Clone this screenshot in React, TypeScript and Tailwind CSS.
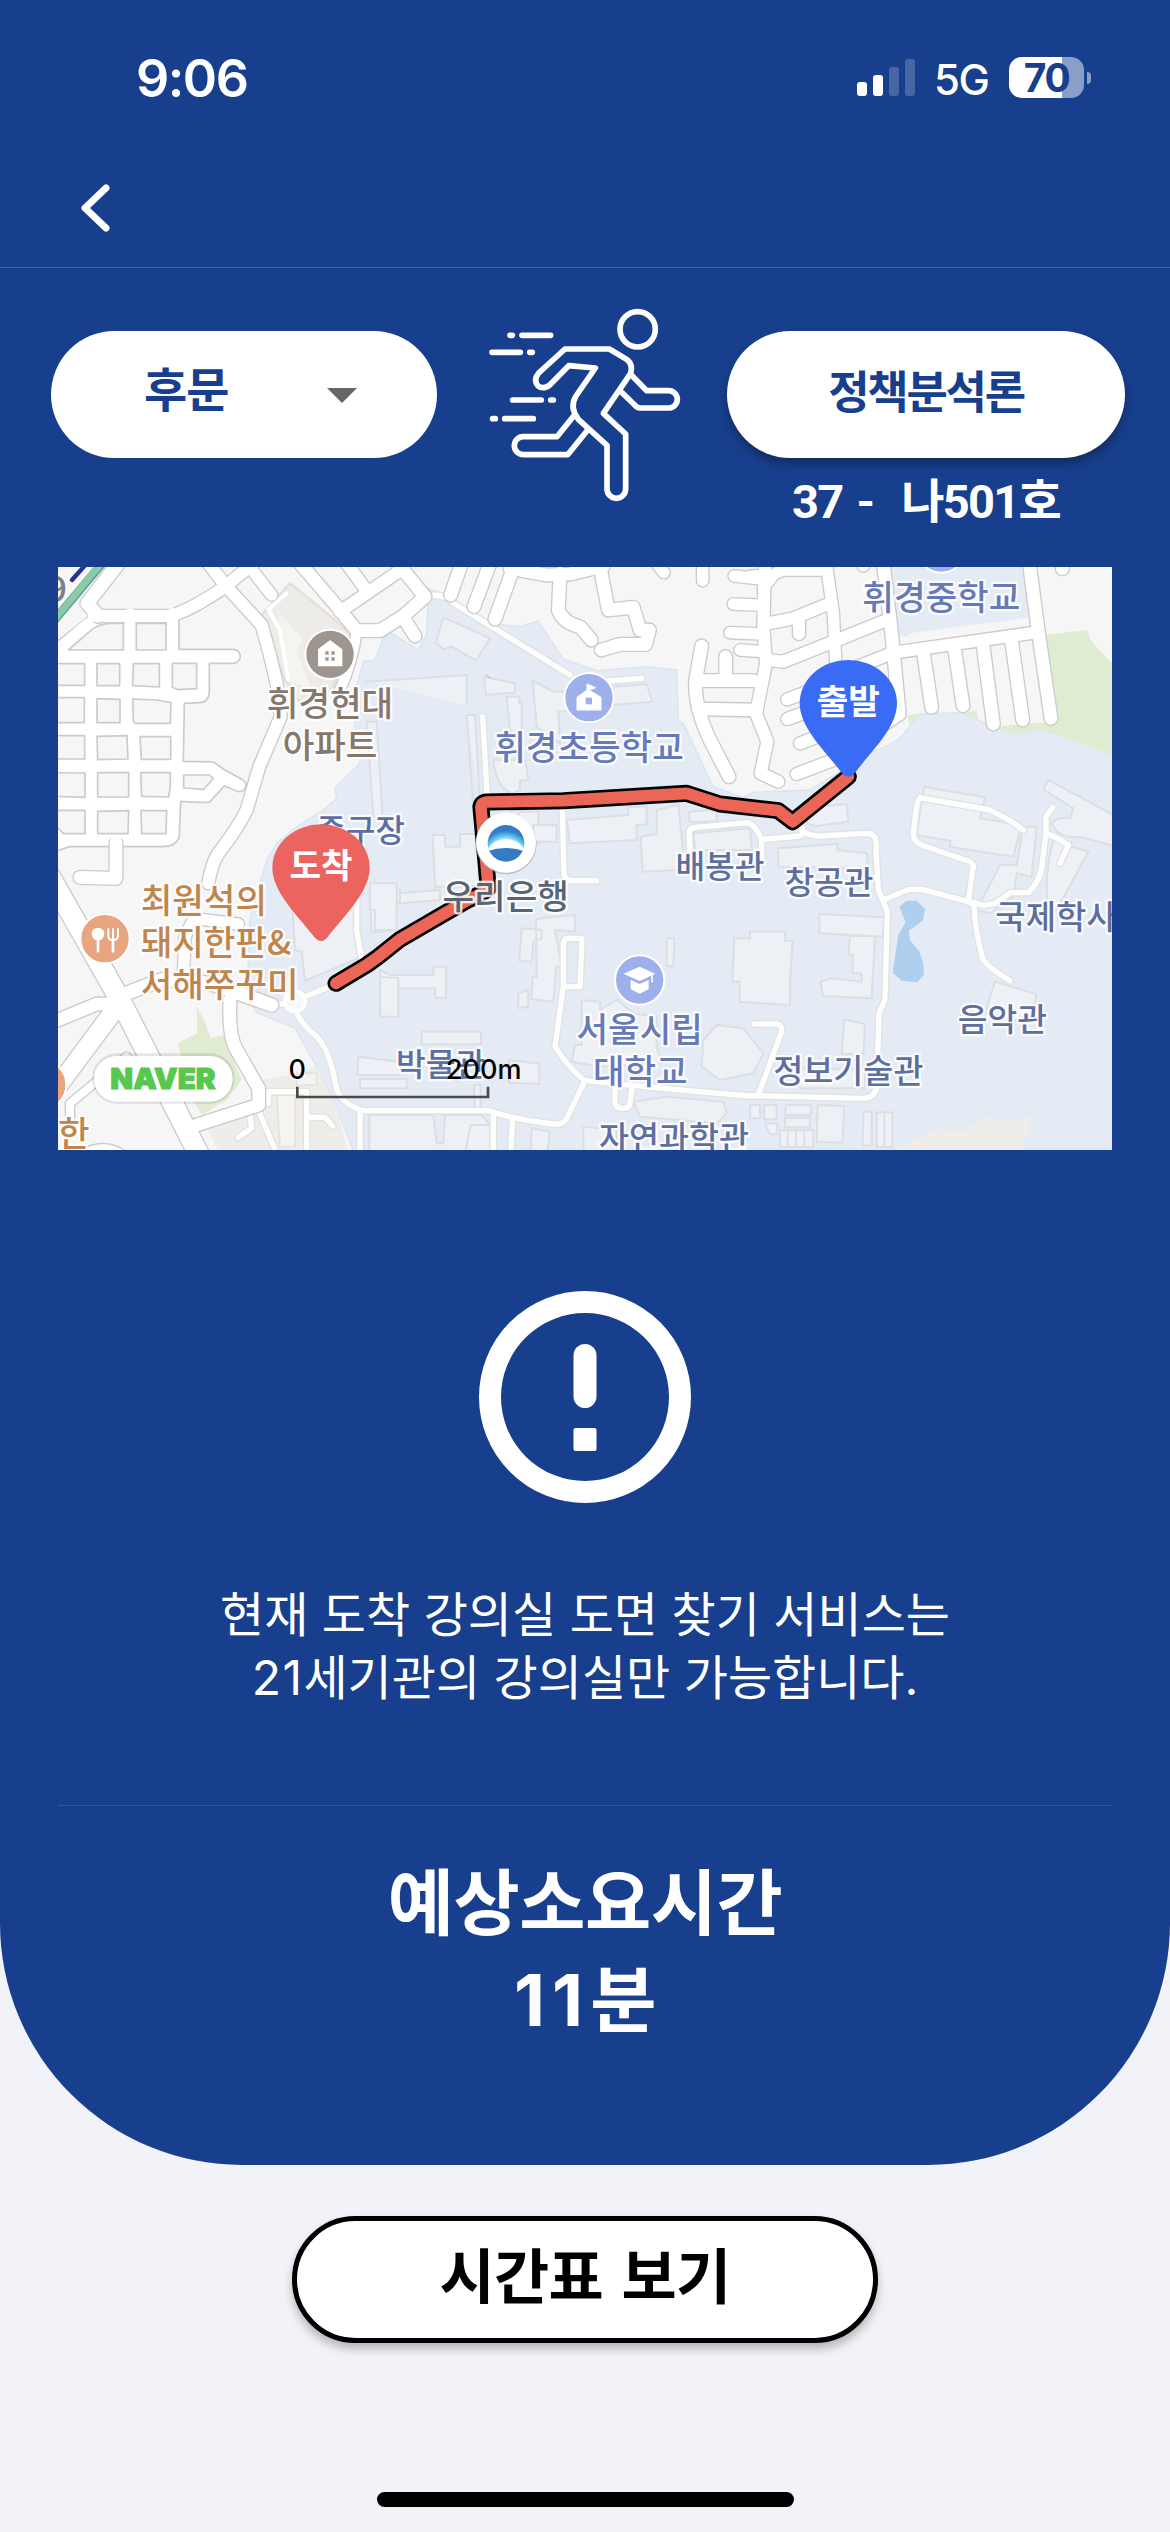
const KR = "font-['Noto_Sans_CJK_KR',sans-serif]";

type Shape = { x?: number; y?: number; d: string; w?: number };

// Map geometry is kept in sheets of the same scale; x and y offset each sheet.
const cityRoads: Shape[] = [
  { w: 40, d: "M205 10L112 130L145 168" },
  { w: 36, d: "M140 168H365Q440 140 525 80L610 10" },
  { w: 36, d: "M475 10L528 78L635 195Q660 280 680 370L692 470L628 620L590 750Q560 810 505 880Q485 910 475 970" },
  { w: 34, d: "M590 10L665 105" },
  { w: 38, d: "M750 10L870 150L920 212H990L1060 168L1125 110L1035 0" },
  { w: 36, d: "M890 10L945 85M870 155L1060 25" },
  { w: 38, d: "M1065 180L1095 228" },
  { w: 30, d: "M920 212Q910 300 870 390" },
  { w: 38, d: "M198 850V955L90 952" },
  { y: 870, w: 60, d: "M0 80L205 440L450 920" },
  { y: 870, w: 38, d: "M0 520L140 462H190" },
  { y: 870, w: 54, d: "M205 465L0 740" },
  { y: 870, w: 24, d: "M230 620L60 760V850M110 905Q170 880 220 915" },
  { y: 870, w: 40, d: "M230 430L340 388L480 400L665 465" },
  { y: 870, w: 38, d: "M540 450Q535 560 560 600L626 715V765L440 825" },
  { y: 870, w: 34, d: "M430 205L565 222M432 205L405 260L400 380" },
  { x: 1050, w: 38, d: "M185 10L152 105M270 10L222 140M345 10L285 177M330 25L440 45L510 42L610 18" },
  { x: 1050, w: 38, d: "M480 40L475 150Q490 190 540 200L574 240" },
  { x: 1050, w: 38, d: "M600 20L625 150L700 142L720 210H748L737 253H660L604 270" },
  { x: 1050, w: 34, d: "M770 10L792 38M908 10V62M1003 48L1110 60M1000 132L1090 136M990 218L1090 222M1020 270L1090 275" },
  { x: 1050, w: 38, d: "M905 258L887 360Q882 440 930 540L987 650M977 290V360M887 362H1060M895 447L1070 450" },
  { x: 2100, w: 36, d: "M0 50L50 45M45 10L40 200L48 310L18 460L52 545L32 640L85 665" },
  { x: 2100, w: 34, d: "M40 90Q60 40 100 30L230 30M230 20L250 160L258 320" },
  { x: 2100, w: 36, d: "M45 192L130 175L235 132M147 180V222M55 300L100 305L250 245L410 180" },
  { x: 2100, w: 38, d: "M400 10L425 220L448 462L330 540" },
  { x: 2100, w: 36, d: "M260 345L430 278L860 217M112 418L220 378M112 477L220 437M150 550L240 515M140 642L290 585" },
  { x: 2100, w: 38, d: "M838 10L865 215L903 475M522 290L545 442M615 275L639 437M700 262L730 492M785 245L818 480" },
  { x: 2100, w: 38, d: "M340 0V15M937 10V26" },
];

const campusRoads: Shape[] = [
  { x: 1050, d: "M85 108Q130 98 165 132L510 345M600 365L725 355M248 470L262 720M487 740L492 940Q495 965 525 962H590" },
  { x: 1050, d: "M870 880L868 815Q870 803 885 802L1040 788Q1062 788 1085 838V900M1085 838L1200 828Q1215 815 1205 800L1180 770M1205 812Q1230 828 1260 828L1400 820Q1428 820 1429 850V890" },
  { x: 2100, d: "M820 810L785 785L720 750L510 713Q500 715 490 825Q492 848 520 857L660 905Q675 915 668 930L655 1025" },
  { x: 2100, d: "M908 742L888 770V820L878 900Q875 960 835 998H780L735 1030L700 1036L660 1025M888 820Q920 830 955 855L930 910" },
  { x: 2100, y: 870, d: "M378 0L385 120L400 155L412 185L405 450L387 490L380 715Q370 745 340 745L0 737M400 150L475 118H515L655 155L672 165Q675 240 698 325Q710 350 780 392" },
  { x: 2100, y: 870, d: "M12 522H80Q100 525 93 550L25 735" },
  { x: 1050, y: 870, d: "M490 410H540L546 265H505Q490 265 490 285V410L465 590Q510 660 555 692L820 718L1050 738" },
  { x: 1050, y: 870, d: "M555 692L500 805Q490 825 460 822Q350 810 265 782H-110Q-170 765 -190 720Q-210 600 -250 560Q-300 520 -312 480M280 790V910M338 810L332 910M645 700V755Q645 775 670 775Q690 775 690 755L696 715M-120 785V910" },
  { y: 870, d: "M765 440L850 405M685 462H705M920 120L920 240L935 330M600 790L605 835L565 862M625 780L680 910M655 760V725H770V900M770 802H825L848 828" },
];

const buildings: Shape[] = [
  { d: "M948 365L1250 345V435M1250 465L1270 740M1250 465L1275 465L1290 740M950 485H980L998 770H970Z" },
  { x: 1050, d: "M130 172L205 205L270 235L228 302L155 260L130 268L108 248Z" },
  { x: 1050, d: "M252 350L345 370V398L258 405ZM320 410H358V430H365V560L330 510Z" },
  { x: 1050, d: "M398 362L460 395H530V450L475 455L480 550L410 500ZM640 380L740 372L757 425L640 435Z" },
  { x: 1050, d: "M280 600Q290 690 340 700L360 690V662L385 660L380 625L375 600ZM355 755H415V850H355ZM98 825H135V860H180V822H235V980H105Z" },
  { x: 1050, d: "M400 795H470V845H400ZM500 780L685 765V740H740V793L710 795V840L510 850ZM770 750L835 735L850 880L830 930L728 935L722 830L770 822Z" },
  { x: 1050, d: "M868 755L950 748V785H868ZM880 820L1050 805L1055 870H885Z" },
  { x: 2100, d: "M180 740L290 733L295 785L200 798L170 790ZM85 865L262 852V870L350 880L355 925L85 920Z" },
  { x: 2100, d: "M522 680L705 712L690 775L815 795L790 890L600 860L602 842L500 825ZM820 800L860 800L845 950L800 940L790 1010L720 1060L680 1050L750 915H800Z" },
  { x: 2100, d: "M895 660L1100 770V860L990 830Q930 840 905 790Q920 770 960 775L970 745L880 688ZM965 860L1015 875L920 1050H895Q880 950 910 840" },
  { x: 1050, y: 870, d: "M0 130L120 120V150L0 160ZM-90 100L0 120V155L-50 160V245H-85ZM-60 360L-30 375H100V350H138V443H105V415H-15V500H-60Z" },
  { x: 1050, y: 870, d: "M365 235L425 240V265L400 275L395 335L358 332ZM408 208L462 200L525 195V245L465 240L485 350H468L460 455L395 448L398 380H410ZM355 430L385 420V470L355 475Z" },
  { x: 1050, y: 870, d: "M800 265H823L820 350L800 348ZM1003 265H1050V245H1155V272H1178L1170 400V465L1020 455L1018 395H997Z" },
  { x: 1050, y: 870, d: "M910 570L950 525L1030 535L1090 610L1060 670L960 690L905 650ZM545 450L600 455V480L650 450L700 490L770 500V590L785 640L600 650L515 635L525 585H545Z" },
  { x: 1050, y: 870, d: "M65 545H243V583H65ZM327 630L418 642V702L327 698ZM222 705H242V795H226ZM-125 620L0 635V675H-128ZM-120 687H20V715H-120ZM-92 795H100L110 880H130L135 795H245L270 825V920H-92ZM395 835L450 845L440 920H392ZM212 825H275V910H195Z" },
  { x: 1050, y: 870, d: "M700 755L800 740L970 755L980 790L950 820L720 800ZM550 830L650 840V910H550Z" },
  { x: 2100, y: 870, d: "M208 192L403 202L397 260L208 250ZM300 258H375L365 445L218 438L212 395L245 385L335 395V370H308V315H295ZM283 508L345 522L340 612H275ZM735 395L860 433L840 520L705 490ZM150 655L345 660V715H150Z" },
  { x: 2100, y: 870, d: "M108 765H182V795H105ZM105 803H180V832H105ZM203 765L283 768L277 878L200 875ZM340 785H365V887H338ZM380 787H427V892H380ZM403 787V892M90 840H190V892H90ZM113 840V892M138 840V892M163 840V892M0 765H30V805H0ZM42 765H80V808H42ZM45 820H82V853H60Z" },
  { y: 870, d: "M725 130L910 145L925 325L765 392L755 305L735 300ZM960 100L1040 100V240H975V180H960ZM990 380L1045 385V500H990Z" },
];

const blocks: string[] = [
  "M10 311H104V376H10Z", "M141 311H209V377H141Z", "M250 311H328V381L248 377Z", "M367 310H440V386L385 389L367 382Z",
  "M10 413H103V488H10Z", "M141 416L210 418V488H141Z", "M248 417L320 420L363 428L361 490H255L250 482Z",
  "M10 527H104V597H10Z", "M141 529L231 527L234 597L143 599Z", "M270 530H362V598H274Z",
  "M10 638L105 639V712L10 709Z", "M143 638H236V711H143Z", "M272 638H361V680L356 711L275 709Z", "M401 645H478L490 655L462 688L401 684Z",
  "M10 751H105V821H40L24 805H10Z", "M143 754L236 752L234 821H143Z", "M273 752H350L348 821H275Z",
  "M55 270L130 205Q150 192 180 190H220V270Z", "M259 190H348V270H259Z",
];

const PIN = "M0 350Q-10 350 -20 338C-65 278 -146 205 -146 130A146 130 0 0 1 146 130C146 205 65 278 20 338Q10 350 0 350Z";
const ROUTE =
  "M2395 650L2228 785L2185 752L2010 732L1910 700L1540 722L1310 726Q1291 728 1293 745L1315 985Q1300 1000 1250 1022L1050 1138L985 1190L950 1215L858 1270";

const at = (s: Shape) => `translate(${s.x ?? 0} ${s.y ?? 0})`;

type LabelProps = { x: number; y: number; t: string; c: string; s?: number; a?: "start" | "middle" };
function Label({ x, y, t, c, s = 103, a = "middle" }: LabelProps) {
  return (
    <text x={x} y={y} fill={c} fontSize={s} fontWeight={500} textAnchor={a} stroke="#fff" strokeOpacity={0.85} strokeWidth={14} strokeLinejoin="round" paintOrder="stroke">
      {t}
    </text>
  );
}

function CampusMap() {
  return (
    <svg viewBox="24 21 3162 1749" className={`block h-[583px] w-[1054px] ${KR}`} strokeLinecap="round" strokeLinejoin="round">
      <rect x="0" y="0" width="3200" height="1800" fill="#f6f6f6" />
      <path
        d="M1000 235L1025 220L1105 270L1130 220L1135 85L1200 110L1320 190L1410 200L1465 183L1540 297L1640 332L1790 320L1880 330L1885 480L1900 490L1990 680L2080 712L2110 697L2280 690L2450 585L2545 540L2610 462L2735 458L2830 500L2905 523L2975 508L3200 585V1800H920L860 1640L800 1520L735 1405L620 1358L590 1310L600 1070L650 900L680 850L740 800L820 750L860 715L855 685L930 610L915 500L920 380L940 305L975 300Z"
        fill="#e4ebf4" stroke="#dbe4ef" strokeWidth="4"
      />
      <path d="M2520 10H2925L2935 173L2580 220L2570 230L2540 228Z" fill="#e4ebf4" />
      <path d="M2988 224L3110 210L3125 245L3200 325V590L2975 508L2905 523L2830 500L2735 458L2780 452L2786 485L2830 500L3000 485ZM2574 465L2610 462L2578 495ZM440 1340L465 1385L482 1435L520 1425L575 1560L530 1620L455 1665L435 1630L382 1450L442 1420Z" fill="#e0ecd2" />
      <path d="M635 165L720 70L830 160L900 220L850 380L800 430L740 420L700 350Z" fill="#eeece8" stroke="#e5e0d8" strokeWidth="8" />
      <path d="M680 150L760 240L740 270L780 380L720 370L700 220Z" fill="#f6f4ef" />
      <path d="M127 203H182V258H127Z" fill="#f6f4ef" stroke="#eeeeea" strokeWidth="8" />
      <path d="M470 1705L630 1610L640 1560L740 1540L800 1520L860 1640L900 1800H520ZM2540 1770L2660 1708L2740 1712L2810 1670L2870 1682L2948 1672L2905 1800H2530Z" fill="#efede9" />
      <path d="M680 1605H735V1760H690ZM740 1540H800V1575H740Z" fill="#f6f4ef" stroke="#e5e2dc" strokeWidth="5" />
      {buildings.map((s, i) => (
        <path key={i} d={s.d} transform={at(s)} fill="#edf1f6" stroke="#dbdfe4" strokeWidth="6" />
      ))}
      <path d="M1310 345L1320 355" stroke="#aaa" strokeWidth="3" />
      <path
        d="M2548 1040L2570 1022H2600L2626 1048L2618 1082L2576 1112L2580 1140L2608 1175L2620 1210L2622 1245L2602 1267L2555 1262L2528 1238L2545 1125L2567 1087Z"
        fill="#aecfee"
      />
      {campusRoads.map((s, i) => (
        <path key={i} d={s.d} transform={at(s)} fill="none" stroke="#e0e2e4" strokeWidth="24" />
      ))}
      {campusRoads.map((s, i) => (
        <path key={i} d={s.d} transform={at(s)} fill="none" stroke="#fefefd" strokeWidth="16" />
      ))}
      <circle cx="735" cy="1324" r="30" fill="#f6f8fa" stroke="#fff" strokeWidth="12" />

      <path
        d="M10 250L24 243L115 170L150 152H370L387 180V268H550A21 21 0 0 1 550 310H478V395Q475 428 450 428L403 430L400 604L490 606L525 630L575 658A19 19 0 0 1 562 694L523 678L480 725Q470 730 392 724L388 830Q380 858 340 860H60L10 875Z"
        fill="#fff" stroke="#cbcbcb" strokeWidth="5"
      />
      {cityRoads.map((s, i) => (
        <path key={i} d={s.d} transform={at(s)} fill="none" stroke="#cbcbcb" strokeWidth={(s.w ?? 38) + 8} />
      ))}
      <path d="M130 168H360" stroke="#fff" strokeWidth="34" />
      {cityRoads.map((s, i) => (
        <path key={i} d={s.d} transform={at(s)} fill="none" stroke="#fff" strokeWidth={s.w} />
      ))}
      <path d="M30 262L115 190M240 160V260M367 160V290M198 835V870" stroke="#fff" strokeWidth="32" />
      {blocks.map((d) => (
        <path key={d} d={d} fill="#f6f6f6" stroke="#cbcbcb" strokeWidth="5" />
      ))}
      <path d="M710 100L655 148L690 210L715 360" fill="none" stroke="#fff" strokeWidth="12" />
      <path d="M10 185L165 0" stroke="#5f9f9b" strokeWidth="26" />
      <path d="M13 180L162 0" stroke="#8cc9a9" strokeWidth="20" />
      <path d="M66 60L115 5" stroke="#27318e" strokeWidth="13" />

      <path d={ROUTE} fill="none" stroke="#000" strokeWidth="51" />
      <path d={ROUTE} fill="none" stroke="#ec6658" strokeWidth="35" />

      <g stroke="#fff" strokeWidth="6">
        <circle cx="840" cy="283" r="74" fill="#9e958e" />
        <circle cx="1617" cy="413" r="74" fill="#9db0ec" />
        <circle cx="1769" cy="1260" r="74" fill="#9db0ec" />
        <circle cx="2674" cy="-36" r="74" fill="#9db0ec" />
        <circle cx="165" cy="1136" r="74" fill="#e8a680" />
        <circle cx="-25" cy="1574" r="74" fill="#e8a680" />
      </g>
      <path d="M804 319V268L840 240L877 268V319Z" fill="#fff" />
      <path d="M826 274h10v10h-10zM844 274h10v10h-10zM826 292h10v10h-10zM844 292h10v10h-10z" fill="#9e958e" />
      <path d="M1581 449V412L1611 390V372L1637 383L1617 390L1653 412V449Z" fill="#fff" strokeWidth="3" stroke="#fff" />
      <path d="M1607 413h19v20h-19z" fill="#9db0ec" />
      <path d="M1720 1241L1769 1220L1816 1241L1769 1263ZM1742 1260L1769 1272L1796 1260V1288L1769 1301L1742 1288Z" fill="#fff" />
      <path d="M1806 1242V1265" stroke="#fff" strokeWidth="5" />
      <circle cx="144" cy="1122" r="19" fill="#fff" />
      <path d="M144 1130V1174M189 1140V1174" stroke="#fff" strokeWidth="8" />
      <path d="M175 1107V1128Q175 1140 189 1140Q204 1140 204 1128V1107M189 1107V1140" fill="none" stroke="#fff" strokeWidth="6" />

      <circle cx="1368" cy="851" r="92" fill="#9a9a9a" opacity=".55" />
      <circle cx="1368" cy="848" r="90" fill="#fff" />
      <defs>
        <clipPath id="logo"><circle cx="1368" cy="850" r="55" /></clipPath>
        <radialGradient id="sky" gradientUnits="userSpaceOnUse" cx="1368" cy="890" r="96">
          <stop offset=".5" stopColor="#e9faff" /><stop offset=".62" stopColor="#6fd0f5" /><stop offset=".8" stopColor="#3580c8" /><stop offset="1" stopColor="#2f78c2" />
        </radialGradient>
      </defs>
      <g clipPath="url(#logo)">
        <rect x="1310" y="794" width="116" height="80" fill="url(#sky)" />
        <path d="M1305 880Q1325 838 1368 838T1430 880Z" fill="#fff" />
        <path d="M1305 876Q1368 852 1430 876V910H1305Z" fill="#347cc2" />
      </g>

      <Label x={20} y={126} t="9" c="#7c828c" s={110} />
      <Label x={840} y={469} t="휘경현대" c="#85776b" />
      <Label x={840} y={594} t="아파트" c="#85776b" />
      <Label x={1617} y={599} t="휘경초등학교" c="#667ab8" />
      <Label x={2674} y={151} t="휘경중학교" c="#667ab8" />
      <Label x={932} y={846} t="족구장" c="#5e6e9f" s={96} />
      <Label x={272} y={1060} t="최원석의" c="#c0854c" a="start" />
      <Label x={272} y={1185} t="돼지한판&amp;" c="#c0854c" a="start" />
      <Label x={272} y={1310} t="서해쭈꾸미" c="#c0854c" a="start" />
      <Label x={24} y={1758} t="한" c="#c0854c" a="start" />
      <Label x={1367} y={1047} t="우리은행" c="#56656f" />
      <Label x={2010} y={954} t="배봉관" c="#5e6e9f" s={97} />
      <Label x={2337} y={1003} t="창공관" c="#5e6e9f" s={97} />
      <Label x={2836} y={1106} t="국제학사" c="#5e6e9f" s={99} a="start" />
      <Label x={2857} y={1414} t="음악관" c="#5e6e9f" s={97} />
      <Label x={2395} y={1569} t="정보기술관" c="#5e6e9f" s={98} />
      <Label x={1172} y={1549} t="박물관" c="#5e6e9f" s={97} />
      <Label x={1769} y={1446} t="서울시립" c="#667ab8" />
      <Label x={1771} y={1571} t="대학교" c="#667ab8" />
      <Label x={1872} y={1771} t="자연과학관" c="#5e6e9f" s={98} />

      <rect x="126" y="1480" width="428" height="151" rx="75" fill="#000" opacity=".1" />
      <rect x="132" y="1488" width="416" height="137" rx="68" fill="#fff" />
      <text x="181" y="1588" fontSize="87" fontWeight="900" fill="#57c84d" stroke="#57c84d" strokeWidth="3" textLength="316" lengthAdjust="spacingAndGlyphs" className="font-['Inter',sans-serif]">NAVER</text>
      <g className="font-['Inter',sans-serif]" fontSize="81" fontWeight="500" textAnchor="middle" fill="#000">
        <text x="742" y="1558" stroke="#fff" strokeWidth="6" paintOrder="stroke">0</text>
        <text x="1301" y="1558">200m</text>
      </g>
      <path d="M742 1580V1611H1314V1580" fill="none" stroke="#4a4a4a" strokeWidth="8" strokeLinecap="butt" strokeLinejoin="miter" />

      <g transform="translate(2395 300)">
        <path d={PIN} fill="#3a6bf5" />
        <text x="0" y="162" fontSize="103" fontWeight="700" textAnchor="middle" fill="#fff">출발</text>
      </g>
      <g transform="translate(813 793)">
        <path d={PIN} fill="#ec645f" />
        <text x="0" y="161" fontSize="103" fontWeight="700" textAnchor="middle" fill="#fff">도착</text>
      </g>
    </svg>
  );
}

function Runner() {
  return (
    <svg viewBox="0 0 690 690" className="h-[230px] w-[230px] shrink-0" fill="none" stroke="#fff" strokeWidth="17" strokeLinecap="round" strokeLinejoin="round">
      <circle cx="503" cy="118" r="53" />
      <path d="M120 136H127M156 136H242M66 187H151M179 187H187M128 330H214M242 330H250M68 386H76M104 386H190" />
      <path d="M285 177H418L470 208Q490 224 482 250L400 370L467 432V597A28 28 0 0 1 411 597V466L325 388Q297 352 318 318L376 234L296 227L240 284Q220 300 204 288Q189 270 206 249Z" />
      <path d="M482 253L530 302H596A26 26 0 0 1 596 354H512Q502 354 495 346L450 302M311 378L261 440H160A27 27 0 0 0 160 494H293L353 420" />
    </svg>
  );
}

function StatusBar() {
  return (
    <div className="flex h-[155px] items-start justify-between pl-[136px] pr-[79px] pt-[57px] font-['Inter',sans-serif] text-white">
      <span className="mt-px text-[52px] leading-[42px] font-semibold tracking-[-1.5px]">9:06</span>
      <div className="flex h-[41px] items-start">
        <div className="mr-[19px] flex h-[39px] items-end gap-[6px]">
          <i className="h-[14px] w-[10px] rounded-[3px] bg-white" />
          <i className="h-[21px] w-[10px] rounded-[3px] bg-white" />
          <i className="h-[29px] w-[10px] rounded-[3px] bg-white/20" />
          <i className="h-[37px] w-[10px] rounded-[3px] bg-white/20" />
        </div>
        <span className="mt-px w-[75px] text-[42px] leading-[43px] font-medium tracking-[-1.5px]">5G</span>
        <div className="flex h-[41px] w-[75px] items-center justify-center rounded-[13px] bg-[linear-gradient(90deg,#fff_71%,#899fc7_71%)] text-[39px] leading-[41px] font-bold tracking-[-1.5px] text-[#183f8d]">
          70
        </div>
        <i className="mt-[15px] ml-[3px] h-[12px] w-[4px] rounded-r-full bg-[#899fc7]" />
      </div>
    </div>
  );
}

export default function App() {
  return (
    <div className={`flex h-[2532px] w-[1170px] flex-col items-center overflow-hidden bg-[#f2f3f8] ${KR}`}>
      <section className="flex h-[2165px] w-full flex-col rounded-b-[242px] bg-[#183f8d]">
        <StatusBar />
        <header className="flex h-[113px] items-start border-b border-[#4466a8] pt-[29px] pl-[81px]">
          <svg viewBox="0 0 29 48" className="h-[48px] w-[29px]" fill="none" stroke="#fff" strokeWidth="7" strokeLinecap="round" strokeLinejoin="round">
            <path d="M25 4L4 24L25 44" />
          </svg>
        </header>

        <div className="flex h-[299px] shrink-0 items-start pt-[22px] pl-[51px]">
          <div className="mt-[41px] mr-[33px] flex h-[127px] w-[386px] items-center justify-between rounded-full bg-white pr-[80px] pl-[93px]">
            <span className="-mt-[15px] text-[47px] leading-[60px] font-bold tracking-[-1px] text-[#183f8d]">후문</span>
            <svg viewBox="0 0 30 15" className="mt-[2px] h-[15px] w-[30px]"><path d="M0 0H30L15 15Z" fill="#666" /></svg>
          </div>
          <Runner />
          <div className="mt-[41px] ml-[27px] flex w-[398px] flex-col items-center">
            <div className="flex h-[127px] w-full items-center justify-center rounded-full bg-white pb-[9px] text-[45px] font-bold tracking-[-2.3px] text-[#183f8d] shadow-[0_6px_10px_rgba(0,0,0,0.3)]">
              정책분석론
            </div>
            <span className="mt-[12px] font-['Roboto','Noto_Sans_CJK_KR',sans-serif] text-[47px] leading-[64px] font-bold tracking-[-1.7px] [word-spacing:4px] whitespace-pre text-white">
              37 -  나501호
            </span>
          </div>
        </div>

        <div className="ml-[58px] w-[1054px]">
          <CampusMap />
        </div>

        <div className="flex flex-col items-center pt-[141px]">
          <svg viewBox="0 0 212 212" className="h-[212px] w-[212px]">
            <circle cx="106" cy="106" r="95" fill="none" stroke="#fff" strokeWidth="22" />
            <rect x="94.5" y="53" width="23" height="64" rx="11.5" fill="#fff" />
            <rect x="94.5" y="137" width="23" height="23" rx="2" fill="#fff" />
          </svg>
          <p className="mt-[80px] h-[126px] text-center font-['Inter','Noto_Sans_CJK_KR',sans-serif] text-[48px] leading-[63px] text-white">
            현재 도착 강의실 도면 찾기 서비스는
            <br />
            <span className="tracking-[1.5px]">21</span>세기관의 강의실만 가능합니다.
          </p>
        </div>

        <div className="mx-[58px] mt-[96px] border-t border-[#3257a0] pt-[48px] text-center font-['Inter','Noto_Sans_CJK_KR',sans-serif] text-[72px] leading-[97px] font-bold tracking-[-0.5px] text-white">
          예상소요시간
          <br />
          <span className="tracking-[7px]">11</span>분
        </div>
      </section>

      <button className="mt-[51px] h-[127px] w-[586px] rounded-full border-[5px] border-black bg-white pb-[13px] text-[60px] leading-none font-semibold tracking-[-0.8px] [word-spacing:6px] text-black shadow-[0_6px_10px_rgba(0,0,0,0.25)]">
        시간표 보기
      </button>
      <div className="mt-[149px] h-[15px] w-[417px] rounded-full bg-black" />
    </div>
  );
}
